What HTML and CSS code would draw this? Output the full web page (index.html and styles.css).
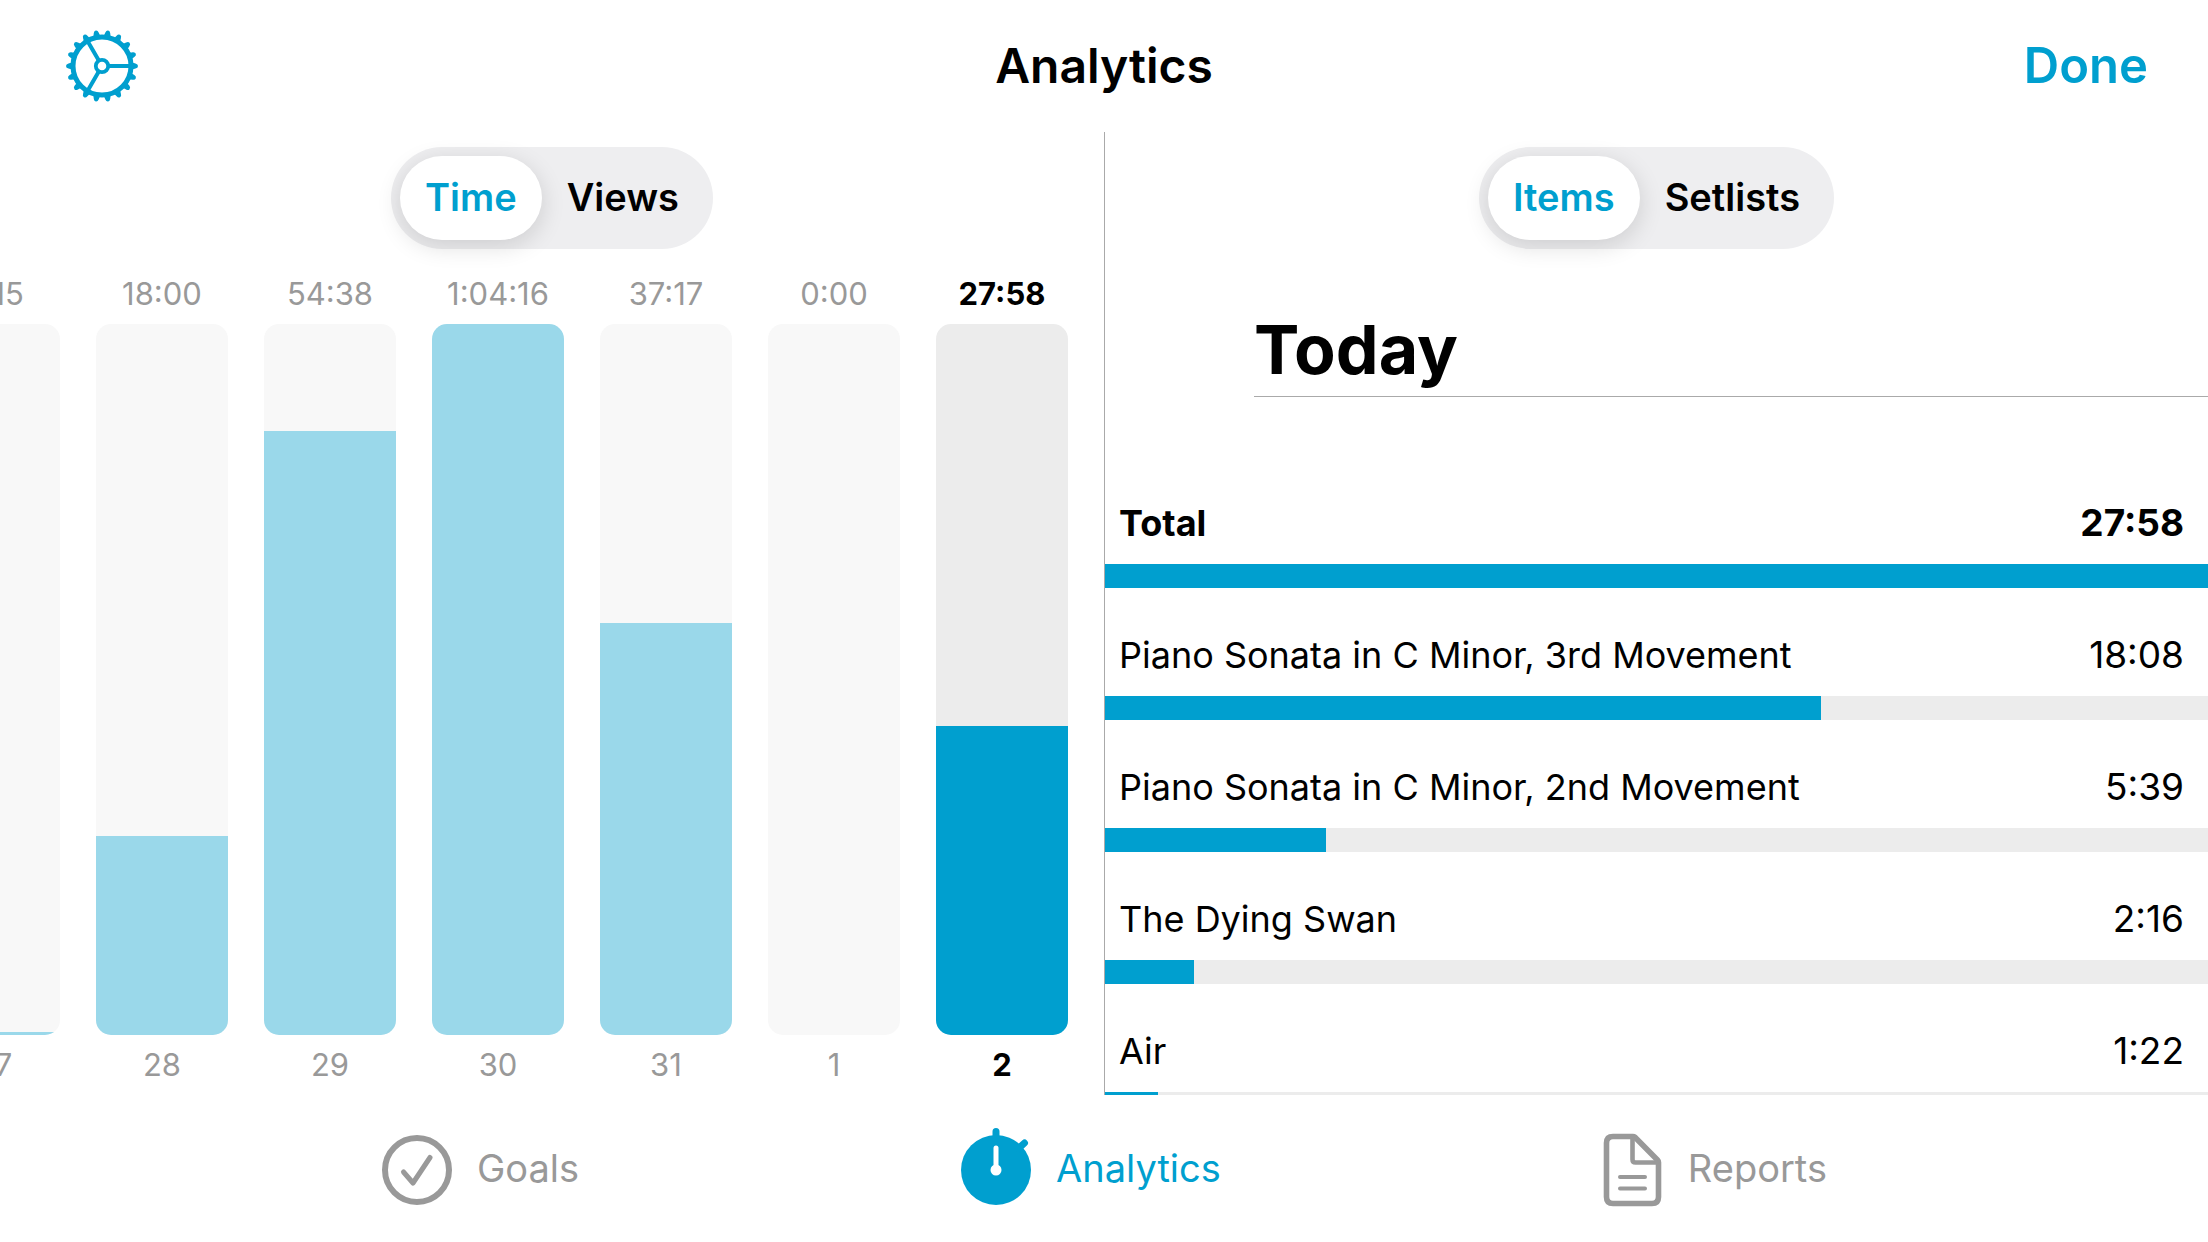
FILE: index.html
```html
<!DOCTYPE html>
<html lang="en">
<head>
<meta charset="utf-8">
<meta name="viewport" content="width=device-width, initial-scale=1">
<title>Analytics</title>
<link rel="stylesheet" href="styles.css">
</head>
<body>
<header class="navbar">
  <button class="settings" type="button" aria-label="Settings">
    <svg class="gear" viewBox="-36 -36 72 72" aria-hidden="true">
      <defs><path id="tooth" d="M-4.500 -29 Q-2.800 -31 -2.500 -33.500 Q-2 -36 0 -36 Q2 -36 2.500 -33.500 Q2.800 -31 4.500 -29 Z"/></defs>
      <g fill="currentColor">
        <use href="#tooth" transform="rotate(10)"/><use href="#tooth" transform="rotate(30)"/><use href="#tooth" transform="rotate(50)"/>
        <use href="#tooth" transform="rotate(70)"/><use href="#tooth" transform="rotate(90)"/><use href="#tooth" transform="rotate(110)"/>
        <use href="#tooth" transform="rotate(130)"/><use href="#tooth" transform="rotate(150)"/><use href="#tooth" transform="rotate(170)"/>
        <use href="#tooth" transform="rotate(190)"/><use href="#tooth" transform="rotate(210)"/><use href="#tooth" transform="rotate(230)"/>
        <use href="#tooth" transform="rotate(250)"/><use href="#tooth" transform="rotate(270)"/><use href="#tooth" transform="rotate(290)"/>
        <use href="#tooth" transform="rotate(310)"/><use href="#tooth" transform="rotate(330)"/><use href="#tooth" transform="rotate(350)"/>
      </g>
      <g fill="none" stroke="currentColor">
        <circle r="29" stroke-width="5"/>
        <circle r="6.200" stroke-width="3.800"/>
        <path d="M7 0H29M-3.500 -6.100L-14.500 -25.100M-3.500 6.100L-14.500 25.100" stroke-width="4"/>
      </g>
    </svg>
  </button>
  <h1 class="title">Analytics</h1>
  <button class="done" type="button">Done</button>
</header>

<main class="panes">
  <section class="pane history" aria-label="Daily history">
    <div class="segmented">
      <button class="segment selected" type="button" aria-pressed="true">Time</button>
      <button class="segment" type="button" aria-pressed="false">Views</button>
    </div>
    <ol class="chart">
      <li class="day"><span class="value">0:15</span><div class="track"><div class="fill" style="height:0.4%"></div></div><span class="date">27</span></li>
      <li class="day"><span class="value">18:00</span><div class="track"><div class="fill" style="height:28%"></div></div><span class="date">28</span></li>
      <li class="day"><span class="value">54:38</span><div class="track"><div class="fill" style="height:85%"></div></div><span class="date">29</span></li>
      <li class="day"><span class="value">1:04:16</span><div class="track"><div class="fill" style="height:100%"></div></div><span class="date">30</span></li>
      <li class="day"><span class="value">37:17</span><div class="track"><div class="fill" style="height:58%"></div></div><span class="date">31</span></li>
      <li class="day"><span class="value">0:00</span><div class="track"><div class="fill" style="height:0%"></div></div><span class="date">1</span></li>
      <li class="day current"><span class="value">27:58</span><div class="track"><div class="fill" style="height:43.5%"></div></div><span class="date">2</span></li>
    </ol>
  </section>

  <section class="pane details" aria-label="Today's items">
    <div class="segmented">
      <button class="segment selected" type="button" aria-pressed="true">Items</button>
      <button class="segment" type="button" aria-pressed="false">Setlists</button>
    </div>
    <h2 class="heading">Today</h2>
    <ul class="items">
      <li class="item total"><div class="line"><span>Total</span><span class="time">27:58</span></div><div class="meter"><div class="amount" style="width:100%"></div></div></li>
      <li class="item"><div class="line"><span>Piano Sonata in C Minor, 3rd Movement</span><span class="time">18:08</span></div><div class="meter"><div class="amount" style="width:64.9%"></div></div></li>
      <li class="item"><div class="line"><span>Piano Sonata in C Minor, 2nd Movement</span><span class="time">5:39</span></div><div class="meter"><div class="amount" style="width:20%"></div></div></li>
      <li class="item"><div class="line"><span>The Dying Swan</span><span class="time">2:16</span></div><div class="meter"><div class="amount" style="width:8.1%"></div></div></li>
      <li class="item"><div class="line"><span>Air</span><span class="time">1:22</span></div><div class="meter"><div class="amount" style="width:4.8%"></div></div></li>
    </ul>
  </section>
</main>

<nav class="tabs" aria-label="Sections">
  <a class="tab" href="#goals">
    <svg class="icon" viewBox="0 0 72 72" fill="none" stroke="currentColor" stroke-linecap="round" stroke-linejoin="round" aria-hidden="true">
      <circle cx="36" cy="36" r="32" stroke-width="6"/>
      <path d="M22.500 38L32 49L49 23.500" stroke-width="5"/>
    </svg>
    <span>Goals</span>
  </a>
  <a class="tab active" href="#analytics" aria-current="page">
    <svg class="icon" viewBox="0 0 72 72" aria-hidden="true">
      <circle cx="36" cy="36" r="35" fill="currentColor"/>
      <path d="M36 4V-2.500M58 15L64.500 9" fill="none" stroke="currentColor" stroke-width="7" stroke-linecap="round"/>
      <path d="M36 36V14" fill="none" stroke="#fff" stroke-width="5" stroke-linecap="round"/>
      <circle cx="36" cy="36" r="5.500" fill="#fff"/>
    </svg>
    <span>Analytics</span>
  </a>
  <a class="tab" href="#reports">
    <svg class="icon sheet" viewBox="5 0 62 72" fill="none" stroke="currentColor" stroke-linecap="round" stroke-linejoin="round" aria-hidden="true">
      <path d="M36 2.500H16Q9.500 2.500 9.500 9V63Q9.500 69.500 16 69.500H55Q61.500 69.500 61.500 63V28.500Q61.500 27 60.500 26L38 3.300Q37 2.500 36 2.500Z" stroke-width="5.600"/>
      <path d="M35.500 4V25.500Q35.500 28.500 38.500 28.500H60" stroke-width="4.600"/>
      <path d="M23 43H48M23 54.500H48" stroke-width="4"/>
    </svg>
    <span>Reports</span>
  </a>
</nav>
</body>
</html>
```
FILE: styles.css
```css
:root {
  --accent: #009fcf;
  --accent-light: #9ad8ea;
  --muted: #999;
}

* {
  box-sizing: border-box;
}

body {
  margin: 0;
  height: 100vh;
  display: flex;
  flex-direction: column;
  overflow: hidden;
  background: #fff;
  color: #000;
  font-family: Inter, "Liberation Sans", sans-serif;
}

button {
  padding: 0;
  border: 0;
  background: none;
  color: inherit;
  font: inherit;
}

ol,
ul {
  margin: 0;
  padding: 0;
  list-style: none;
}

.navbar {
  flex: none;
  height: 132px;
  padding: 0 60px;
  display: grid;
  grid-template-columns: 1fr auto 1fr;
  align-items: center;
  font-size: 49px;
  font-weight: 600;
}

.settings {
  justify-self: start;
  height: 72px;
  padding-left: 6px;
  color: var(--accent);
}

.gear {
  display: block;
  width: 72px;
  height: 72px;
}

.title {
  margin: 0;
  padding-bottom: 2px;
  font-size: 48px;
  font-weight: 600;
}

.done {
  justify-self: end;
  padding-bottom: 2px;
  color: var(--accent);
}

.panes {
  flex: 1;
  min-height: 0;
  display: grid;
  grid-template-columns: 1fr 1fr;
}

.pane {
  min-width: 0;
  min-height: 0;
  padding-top: 15px;
  display: flex;
  flex-direction: column;
  overflow: hidden;
}

.segmented {
  flex: none;
  align-self: center;
  height: 102px;
  padding: 9px;
  display: flex;
  border-radius: 51px;
  background: #eeeef0;
  font-size: 38px;
  font-weight: 600;
}

.segment {
  padding: 0 25px 3px;
  border-radius: 42px;
}

.segment.selected {
  background: #fff;
  color: var(--accent);
  box-shadow: 0 6px 24px rgba(0, 0, 0, 0.14);
}

.chart {
  flex: 1;
  min-height: 0;
  padding: 21px 36px 6px 0;
  display: flex;
  justify-content: flex-end;
  gap: 36px;
}

.day {
  flex: none;
  width: 132px;
  display: flex;
  flex-direction: column;
  align-items: center;
  color: var(--muted);
  font-size: 31px;
}

.value,
.date {
  flex: none;
  height: 54px;
  line-height: 48px;
}

.date {
  line-height: 60px;
}

.track {
  flex: 1;
  width: 100%;
  display: flex;
  align-items: flex-end;
  overflow: hidden;
  border-radius: 15px;
  background: #f8f8f8;
}

.fill {
  width: 100%;
  background: var(--accent-light);
}

.current {
  color: #000;
  font-weight: 700;
}

.current .track {
  background: #ececec;
}

.current .fill {
  background: var(--accent);
}

.details {
  border-left: 1px solid #aaa;
}

.heading {
  flex: none;
  height: 148px;
  margin: 0 0 59px 149px;
  padding-top: 54px;
  border-bottom: 1px solid #aaa;
  font-size: 68px;
  line-height: 92px;
  font-weight: 700;
}

.item {
  font-size: 36px;
}

.line {
  height: 108px;
  padding: 24px 24px 0 14px;
  display: flex;
  justify-content: space-between;
  line-height: 86px;
}

.time {
  font-size: 37px;
}

.total {
  font-weight: 700;
}

.meter {
  height: 24px;
  background: #ececec;
}

.amount {
  height: 100%;
  background: var(--accent);
}

.tabs {
  flex: none;
  height: 147px;
  padding-top: 3px;
  display: flex;
  justify-content: space-evenly;
  align-items: center;
  font-size: 38px;
}

.tab {
  display: flex;
  align-items: center;
  gap: 24px;
  color: var(--muted);
  text-decoration: none;
}

.tab span {
  padding-bottom: 4px;
}

.tab.active {
  color: var(--accent);
}

.icon {
  width: 72px;
  height: 72px;
  overflow: visible;
}

.icon.sheet {
  width: 62px;
}
```
